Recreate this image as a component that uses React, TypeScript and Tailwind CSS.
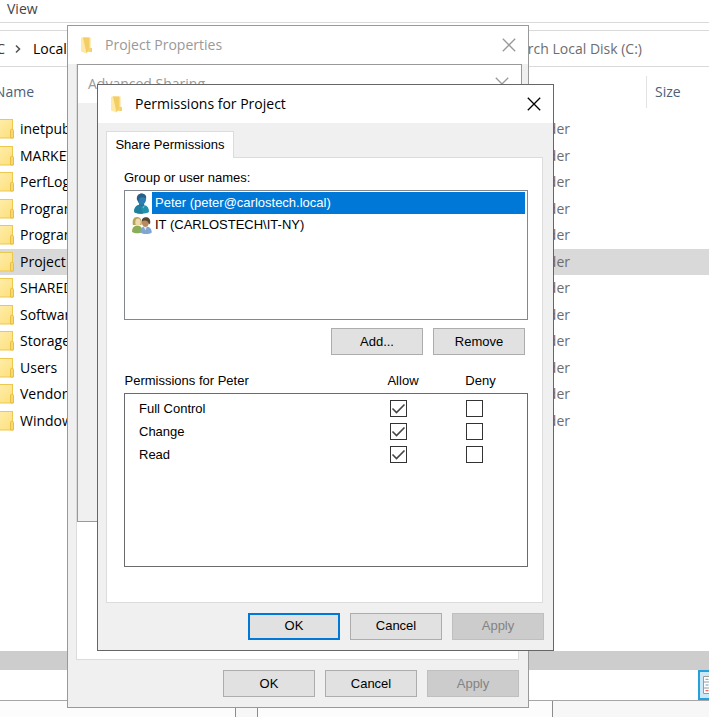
import { useState, type ReactNode } from "react";
import clsx from "clsx";

const FOLDERS = [
  "inetpub",
  "MARKETING",
  "PerfLogs",
  "Program Files",
  "Program Files (x86)",
  "Project",
  "SHARED",
  "Software",
  "Storage",
  "Users",
  "Vendors",
  "Windows",
];

const PERMISSIONS = ["Full Control", "Change", "Read"];

function FolderIcon() {
  return (
    <svg width="14" height="20" viewBox="0 0 14 20" className="shrink-0">
      <defs>
        <linearGradient id="folder" x1="0" y1="0" x2="1" y2="1">
          <stop offset="0" stopColor="#ffefb0" />
          <stop offset="1" stopColor="#fddf7c" />
        </linearGradient>
      </defs>
      <rect x="-6" y="0.5" width="18.5" height="18.5" fill="url(#folder)" stroke="#edc84f" />
      <path d="M10.5 19V11.5a1.2 1.2 0 0 1 1.2-1.2h0.6a1.2 1.2 0 0 1 1.2 1.2V19z" fill="#f8d867" stroke="#e8bf45" />
    </svg>
  );
}

function TitleFolderIcon() {
  return (
    <svg width="13" height="17" viewBox="0 0 13 17" className="shrink-0">
      <path d="M2 0.500h8.500v10.500l1.500 0.500V15H6z" fill="#fbdc80" />
      <path d="M1 1l1-0.500 4.500 3.500V16.500L1 14.500z" fill="#ffe9a6" />
      <path d="M3 0.500h6v12l-2.500 4z" fill="#f3cd66" />
      <path d="M9.500 11h2.500v4h-2.500z" fill="#f5d070" />
    </svg>
  );
}

function UserIcon() {
  return (
    <svg width="20" height="21" viewBox="0 0 20 21" className="shrink-0">
      <path d="M2 19c0-4 1.500-6.300 5-7h5c3.500.7 5 3 5 7-3 2.300-12 2.300-15 0z" fill="#2391ab" />
      <path d="M9 11.500h4l-1.500 4z" fill="#7cc4d2" />
      <path d="M2.500 19.300C2 15 4 12.500 7.500 11.500l3.500 9.300c-3 .2-6.500-.2-8.500-1.500z" fill="#1f7f9c" />
      <path d="M7 9h5v4l-2 1-3-1.500z" fill="#28759f" />
      <ellipse cx="9.700" cy="6" rx="4.400" ry="5.500" fill="#2d7fb0" />
      <path d="M4.900 6.500C4.300 2.300 7 .3 10 .4c3 .1 4.600 2 4.200 5C12 4 9 4 7.500 5.500L7 9z" fill="#285f88" />
    </svg>
  );
}

function GroupIcon() {
  return (
    <svg width="20" height="21" viewBox="0 0 20 21" className="shrink-0">
      <path d="M0 17c0-4 1.500-6 4.500-6.500 4 0 6 2 6 6.500-3 1.800-7.500 1.800-10.500 0z" fill="#8aae55" />
      <path d="M0.800 10C0 5 1.500 2 5 2s5.500 3 4.500 8z" fill="#b5a35e" />
      <ellipse cx="6" cy="7.200" rx="2.700" ry="3.800" fill="#f1d9ae" />
      <path d="M8.500 17.500c0-4 1.500-6 5-6.200 4 .2 6 2.200 6.300 6.200-3 2-8.300 2-11.300 0z" fill="#7fa5d3" />
      <path d="M11.500 11.500h3.500l-1.500 4z" fill="#dfeaf5" />
      <ellipse cx="13.400" cy="7.300" rx="3.600" ry="4.600" fill="#b98a5c" />
      <path d="M9.800 6.500C9.800 3.500 11.300 2.200 14 2.200s4.800 1.800 4.200 6l-1.200 1.300C16.500 6 13 4.500 9.800 6.500z" fill="#584432" />
    </svg>
  );
}

function CloseButton({ label }: { label: string }) {
  return (
    <button type="button" aria-label={label} className="p-1">
      <svg width="14" height="14" viewBox="0 0 14 14" fill="none" stroke="currentColor" strokeWidth="1.3">
        <path d="M0.800 0.800l12.400 12.400M13.200 0.800L0.800 13.200" />
      </svg>
    </button>
  );
}

function TitleBar({ title, icon, active }: { title: string; icon?: boolean; active?: boolean }) {
  return (
    <header
      className={clsx(
        "flex h-[38px] shrink-0 items-center gap-2 bg-white pr-2 font-['Open_Sans','Noto_Sans',sans-serif] text-sm",
        icon ? "pl-3" : "pl-[6px]",
        active ? "text-black" : "text-[#999999]"
      )}
    >
      {icon && <TitleFolderIcon />}
      <h2 className="flex-1 whitespace-nowrap pl-1">{title}</h2>
      <CloseButton label={`Close ${title}`} />
    </header>
  );
}

function DialogButton({ children, primary, disabled }: { children: ReactNode; primary?: boolean; disabled?: boolean }) {
  return (
    <button
      type="button"
      disabled={disabled}
      className={clsx(
        "h-[27px] w-[92px]",
        primary ? "border-2 border-[#0078d7]" : "border",
        disabled ? "border-[#bfbfbf] bg-[#cccccc] text-[#838383]" : "bg-[#e1e1e1]",
        !primary && !disabled && "border-[#adadad]"
      )}
    >
      {children}
    </button>
  );
}

function Check({ label, defaultChecked }: { label: string; defaultChecked?: boolean }) {
  return (
    <label className="mx-auto grid w-[17px]">
      <input
        type="checkbox"
        aria-label={label}
        defaultChecked={defaultChecked}
        className="peer col-start-1 row-start-1 size-[17px] appearance-none border border-[#333333] bg-white"
      />
      <svg
        viewBox="0 0 17 17"
        className="pointer-events-none invisible col-start-1 row-start-1 size-[17px] peer-checked:visible"
        fill="none"
        stroke="#444444"
        strokeWidth="1.6"
      >
        <path d="M2.500 8.500l4 4 8-8" />
      </svg>
    </label>
  );
}

function Explorer() {
  return (
    <main className="flex min-h-screen flex-col overflow-hidden whitespace-nowrap font-['Open_Sans','Noto_Sans',sans-serif] text-sm text-black">
      <nav className="flex h-[23px] items-start border-b border-[#dadada] px-[7px]">
        <button type="button" className="h-[18px] leading-[18px] text-[#444444]">
          View
        </button>
      </nav>
      <div className="mt-[7px] flex h-[37px] items-center border-y border-[#d9d9d9]">
        <div className="flex w-[5px] justify-end overflow-hidden text-[#444444]">This PC</div>
        <svg width="28" height="10" viewBox="0 0 28 10" fill="none" stroke="#555555" strokeWidth="1.6">
          <path d="M11 1.500L14.500 5 11 8.500" />
        </svg>
        <div className="w-[447px]">Local Disk (C:)</div>
        <div className="w-[162px] text-right text-[#6d6d6d]">Search Local Disk (C:)</div>
      </div>
      <div className="mt-[9px] flex h-8 items-center text-[#4c607a]">
        <div className="flex w-[34px] justify-end overflow-hidden">Name</div>
        <div className="w-[612px]" />
        <div className="flex h-full items-center border-l border-[#e2e2e2] pl-2">Size</div>
      </div>
      <ul className="mt-2 grid h-[318px] auto-rows-fr">
        {FOLDERS.map((name) => (
          <li key={name} className={clsx("flex items-center", name === "Project" && "bg-[#d9d9d9]")}>
            <FolderIcon />
            <span className="w-[455px] pl-[6px]">{name}</span>
            <span className="w-[101px] text-right text-[#6d6d6d]">File folder</span>
          </li>
        ))}
      </ul>
      <div className="mt-auto h-[19px] bg-[#cdcdcd]" />
      <div className="flex h-[30px] justify-end">
        <button type="button" aria-label="Details view" className="w-[11px] border-2 border-r-0 border-[#26a0da] bg-[#cce8f7] pl-[3px]">
          <svg width="6" height="18" viewBox="0 0 6 18">
            <path d="M0.500 0.500h9v17h-9zM0.500 6h9M0.500 12h9" fill="#ffffff" stroke="#9a9a9a" />
            <path d="M2.500 3.300h3" stroke="#79a878" />
            <path d="M2.500 9h3" stroke="#5b9be0" />
            <path d="M2.500 14.700h3" stroke="#ef4b4b" />
          </svg>
        </button>
      </div>
      <div className="flex h-[17px] border-t border-[#a6a6a6] bg-[#fcfcfc]">
        <div className="w-[236px] border-r border-[#8c8c8c]" />
        <div className="w-[22px] border-r border-[#8c8c8c] bg-[#f7f7f7]" />
        <div className="w-[295px] border-r border-[#8c8c8c]" />
        <div className="flex-1 bg-[#f7f7f7]" />
      </div>
    </main>
  );
}

function PermissionsDialog() {
  const [selected, setSelected] = useState("Peter (peter@carlostech.local)");
  const users = [
    { name: "Peter (peter@carlostech.local)", icon: <UserIcon /> },
    { name: "IT (CARLOSTECH\\IT-NY)", icon: <GroupIcon /> },
  ];

  return (
    <section className="absolute left-[97px] top-[84px] flex w-[457px] flex-col border border-[#666666] bg-[#f0f0f0]">
      <TitleBar title="Permissions for Project" icon active />
      <div className="mt-2 flex px-2">
        <button type="button" className="z-10 -mb-px h-[27px] w-[128px] border border-b-0 border-[#dcdcdc] bg-white">
          Share Permissions
        </button>
      </div>
      <div className="ml-2 mr-[10px] border border-[#dcdcdc] bg-white pb-[35px] pl-[17px] pr-[14px] pt-[11px]">
        <p className="h-[21px] leading-[17px]">Group or user names:</p>
        <div className="h-[130px] border border-[#828790] py-px pl-[7px] pr-[2px]">
          {users.map(({ name, icon }) => (
            <button key={name} type="button" onClick={() => setSelected(name)} className="flex h-[22px] w-full items-center text-left">
              {icon}
              <span
                className={clsx(
                  "flex h-full flex-1 items-center pl-[3px]",
                  selected === name && "bg-[#0078d7] text-white"
                )}
              >
                {name}
              </span>
            </button>
          ))}
        </div>
        <div className="mt-2 flex justify-end gap-[10px] pr-[3px]">
          <DialogButton>Add...</DialogButton>
          <DialogButton>Remove</DialogButton>
        </div>
        <table className="mt-4 w-full table-fixed border-collapse">
          <thead>
            <tr className="h-[22px] align-top">
              <th className="text-left font-normal">Permissions for Peter</th>
              <th className="w-[76px] pl-[9px] font-normal">Allow</th>
              <th className="w-[76px] pl-3 font-normal">Deny</th>
              <th className="w-[15px]" />
            </tr>
          </thead>
          <tbody className="border border-[#6b6b6b]">
            <tr className="h-1">
              <td colSpan={4} />
            </tr>
            {PERMISSIONS.map((permission) => (
              <tr key={permission} className="h-[23px]">
                <td className="pl-[14px]">{permission}</td>
                <td>
                  <Check label={`Allow ${permission}`} defaultChecked />
                </td>
                <td>
                  <Check label={`Deny ${permission}`} />
                </td>
                <td />
              </tr>
            ))}
            <tr className="h-[100px]">
              <td colSpan={4} />
            </tr>
          </tbody>
        </table>
      </div>
      <footer className="flex justify-end gap-[10px] py-[10px] pr-[9px]">
        <DialogButton primary>OK</DialogButton>
        <DialogButton>Cancel</DialogButton>
        <DialogButton disabled>Apply</DialogButton>
      </footer>
    </section>
  );
}

export default function App() {
  return (
    <div className="relative min-h-screen overflow-hidden bg-white font-['Liberation_Sans',Arial,sans-serif] text-[13px] leading-5 text-black">
      <Explorer />
      <section className="absolute left-[67px] top-[25px] flex h-[683px] w-[462px] flex-col border border-[#999999] bg-[#f0f0f0]">
        <TitleBar title="Project Properties" icon />
        <div className="ml-2 mr-[9px] flex-1 border border-t-0 border-[#dcdcdc] bg-white" />
        <footer className="flex justify-end gap-[10px] py-[10px] pr-[9px]">
          <DialogButton>OK</DialogButton>
          <DialogButton>Cancel</DialogButton>
          <DialogButton disabled>Apply</DialogButton>
        </footer>
      </section>
      <section className="absolute left-[77px] top-[64px] h-[458px] w-[445px] border border-[#999999] bg-[#f0f0f0]">
        <TitleBar title="Advanced Sharing" />
      </section>
      <PermissionsDialog />
    </div>
  );
}
